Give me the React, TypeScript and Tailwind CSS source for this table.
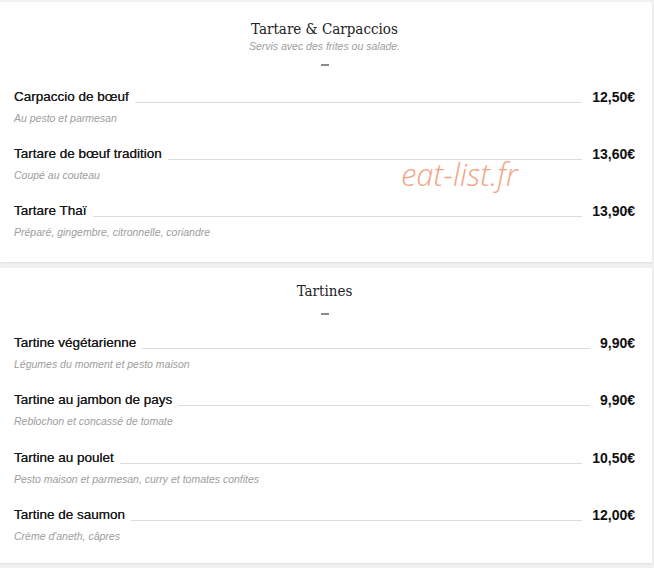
const sections = [
  {
    title: "Tartare & Carpaccios",
    subtitle: "Servis avec des frites ou salade.",
    items: [
      { name: "Carpaccio de bœuf", desc: "Au pesto et parmesan", price: "12,50€" },
      { name: "Tartare de bœuf tradition", desc: "Coupé au couteau", price: "13,60€" },
      { name: "Tartare Thaï", desc: "Préparé, gingembre, citronnelle, coriandre", price: "13,90€" },
    ],
  },
  {
    title: "Tartines",
    subtitle: "",
    items: [
      { name: "Tartine végétarienne", desc: "Légumes du moment et pesto maison", price: "9,90€" },
      { name: "Tartine au jambon de pays", desc: "Reblochon et concassé de tomate", price: "9,90€" },
      { name: "Tartine au poulet", desc: "Pesto maison et parmesan, curry et tomates confites", price: "10,50€" },
      { name: "Tartine de saumon", desc: "Crème d'aneth, câpres", price: "12,00€" },
    ],
  },
];

type Item = { name: string; desc: string; price: string };

const titleFont = { fontFamily: '"DejaVu Serif Condensed", "DejaVu Serif", serif' };

const MenuItem = ({ item }: { item: Item }) => (
  <div className="flex flex-col">
    <div className="flex items-end h-[18px]">
      <span className="text-[13.5px] leading-[18px] text-[#1a1a1a] whitespace-nowrap [text-shadow:0_0_0.2px_#333]">
        {item.name}
      </span>
      <span className="flex-1 h-px bg-[#dcdcdc] ml-[6px] mr-[10px] mb-[3px]" />
      <span className="text-[14px] leading-[18px] font-bold text-[#111] whitespace-nowrap">{item.price}</span>
    </div>
    <span className="mt-[5px] text-[10.5px] leading-[14px] italic text-[#9d9d9d]">{item.desc}</span>
  </div>
);

export default function App() {
  return (
    <div
      className="relative w-[654px] h-[568px] bg-[#f1f1f1] pt-[2px] overflow-hidden"
      style={{ fontFamily: '"Liberation Sans", Arial, sans-serif' }}
    >
      {/* first card */}
      <div className="w-[652px] bg-white shadow-[0_1px_2px_rgba(0,0,0,0.08)] pt-[17px] pb-[23px] pl-[14px] pr-[17px]">
        <div className="flex flex-col items-center">
          <h2 className="text-[15px] leading-[20px] text-[#222]" style={titleFont}>
            {sections[0].title}
          </h2>
          <p className="text-[10.5px] leading-[14px] italic text-[#9d9d9d]">{sections[0].subtitle}</p>
          <span className="mt-[11px] w-[8px] h-[2px] bg-[#8a8a8a]" />
        </div>
        <div className="mt-[22px] flex flex-col gap-[20px]">
          {sections[0].items.map((it) => (
            <MenuItem key={it.name} item={it} />
          ))}
        </div>
      </div>

      {/* second card */}
      <div className="mt-[6px] w-[652px] bg-white shadow-[0_1px_2px_rgba(0,0,0,0.08)] pt-[13px] pb-[20px] pl-[14px] pr-[17px]">
        <div className="flex flex-col items-center">
          <h2 className="text-[15px] leading-[20px] text-[#222]" style={titleFont}>
            {sections[1].title}
          </h2>
          <span className="mt-[12px] w-[8px] h-[2px] bg-[#8a8a8a]" />
        </div>
        <div className="mt-[19px] flex flex-col gap-[20.4px]">
          {sections[1].items.map((it) => (
            <MenuItem key={it.name} item={it} />
          ))}
        </div>
      </div>

      {/* watermark */}
      <span
        className="absolute left-[401px] top-[155px] text-[31px] leading-[38px] italic font-light text-[#f2a485]"
        style={{ fontFamily: '"Open Sans", sans-serif' }}
      >
        eat-list.fr
      </span>
    </div>
  );
}
